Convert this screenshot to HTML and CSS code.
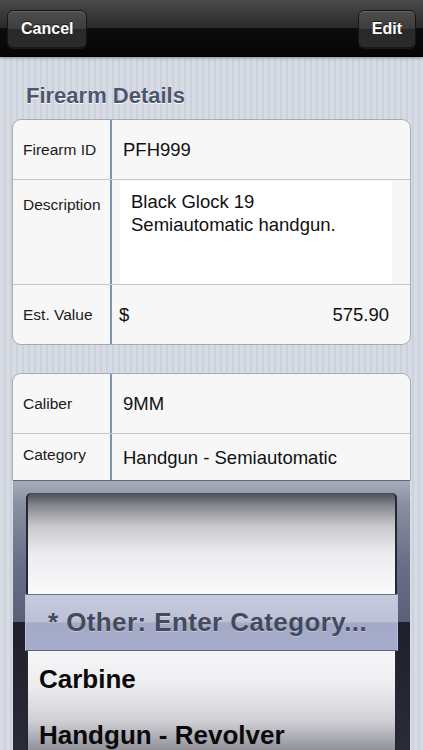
FILE: index.html
```html
<!DOCTYPE html>
<html lang="en">
<head>
    <meta charset="UTF-8">
    <meta name="viewport" content="width=device-width, initial-scale=1.0">
    <title>Firearm Details</title>
    <link rel="stylesheet" href="styles.css">
</head>
<body>
    <div class="navbar">
        <button class="nav-btn">Cancel</button>
        <button class="nav-btn">Edit</button>
    </div>

    <div class="content">
        <h1 class="section-title">Firearm Details</h1>

        <div class="card">
            <div class="row">
                <div class="label">Firearm ID</div>
                <div class="value">PFH999</div>
            </div>
            <div class="row row-tall">
                <div class="label label-top">Description</div>
                <div class="value value-area">
                    <div class="textarea">Black Glock 19<br>Semiautomatic handgun.</div>
                </div>
            </div>
            <div class="row">
                <div class="label">Est. Value</div>
                <div class="value value-money">
                    <span>$</span>
                    <span>575.90</span>
                </div>
            </div>
        </div>

        <div class="card card-open">
            <div class="row">
                <div class="label">Caliber</div>
                <div class="value">9MM</div>
            </div>
            <div class="row row-short">
                <div class="label">Category</div>
                <div class="value">Handgun - Semiautomatic</div>
            </div>
        </div>

        <div class="picker">
            <div class="wheel">
                <div class="wheel-top"></div>
                <div class="select-bar">* Other: Enter Category...</div>
                <div class="wheel-rows">
                    <div class="wheel-row">Carbine</div>
                    <div class="wheel-row">Handgun - Revolver</div>
                </div>
            </div>
        </div>
    </div>
</body>
</html>
```

FILE: styles.css
```css
html, body {
    margin: 0;
    padding: 0;
}
body {
    width: 423px;
    height: 750px;
    overflow: hidden;
    font-family: "Liberation Sans", Arial, sans-serif;
    background-color: #d3d7e0;
    background-image: repeating-linear-gradient(to right, #d7dbe4 0, #d7dbe4 4px, #ccd1db 4px, #ccd1db 6px);
}
.navbar {
    position: relative;
    z-index: 2;
    height: 57px;
    display: flex;
    justify-content: space-between;
    align-items: center;
    padding: 0 7px;
    background: linear-gradient(#4a4a4a 0, #2a2a2a 50%, #0d0d0d 50%, #050505 100%);
    border-bottom: 1px solid #000;
    box-sizing: border-box;
    box-shadow: 0 1px 3px rgba(0,0,0,0.35);
}
.nav-btn {
    height: 38px;
    padding: 0 13px;
    margin-top: 1px;
    font-family: "Liberation Sans", Arial, sans-serif;
    font-size: 16px;
    font-weight: bold;
    color: #fff;
    text-shadow: 0 -1px 0 rgba(0,0,0,0.6);
    background: linear-gradient(#4e4e4e 0, #3c3c3c 50%, #282828 50%, #2c2c2c 100%);
    border: 1px solid #161616;
    border-radius: 6px;
    box-shadow: inset 0 1px 0 rgba(255,255,255,0.12), 0 1px 0 rgba(255,255,255,0.08);
}
.content {
    padding: 0 12px;
}
.section-title {
    margin: 0;
    padding: 27px 14px 0;
    height: 24px;
    line-height: 24px;
    font-size: 22px;
    font-weight: bold;
    color: #4d566e;
    text-shadow: 0 1px 0 #fff;
}
.card {
    margin-top: 11px;
    background-color: #f7f7f7;
    border: 1px solid #a8abb2;
    border-radius: 9px;
    overflow: hidden;
}
.card-open {
    margin-top: 28px;
    border-bottom: none;
    border-radius: 9px 9px 0 0;
}
.row {
    display: flex;
    height: 59px;
    border-bottom: 1px solid #c6c7ca;
}
.row:last-child {
    border-bottom: none;
}
.row-tall {
    height: 104px;
}
.row-short {
    height: 46px;
    align-items: stretch;
}
.label {
    width: 87px;
    flex-shrink: 0;
    padding-left: 10px;
    display: flex;
    align-items: center;
    font-size: 15.5px;
    color: #1a1a1a;
    border-right: 2px solid #7d93ad;
}
.label-top {
    align-items: flex-start;
    padding-top: 16px;
}
.value {
    flex: 1;
    display: flex;
    align-items: center;
    padding-left: 11px;
    font-size: 18.5px;
    color: #111;
}
.value-area {
    padding: 1px 18px 0 8px;
    align-items: stretch;
}
.textarea {
    flex: 1;
    background-color: #fff;
    padding: 9px 11px 0;
    line-height: 23px;
}
.value-money {
    justify-content: space-between;
    padding-left: 7px;
    padding-right: 21px;
}
.row-short .value {
    padding-top: 2px;
}
.row-short .label {
    padding-bottom: 4px;
}
.picker {
    margin: 0 1px;
    height: 271px;
    border-top: 1px solid #5f6476;
    box-sizing: border-box;
    padding: 12px 13px 0;
    background: linear-gradient(#a7acb8 0, #8a90a2 22px, #6a7088 80px, #5a6078 141px, #1f202b 141px, #2a2b36 100%);
}
.wheel {
    height: 100%;
    display: flex;
    flex-direction: column;
}
.wheel-top {
    height: 101px;
    flex-shrink: 0;
    border-radius: 5px 5px 0 0;
    border-left: 2px solid #252735;
    border-right: 2px solid #252735;
    background: linear-gradient(#4c4c55 0, #85858d 12%, #c6c6cb 32%, #ebebee 58%, #fafafb 100%);
}
.select-bar {
    height: 55px;
    flex-shrink: 0;
    margin: 0 -1px;
    padding-left: 22px;
    display: flex;
    align-items: center;
    font-size: 26px;
    font-weight: bold;
    letter-spacing: 0.4px;
    color: #434a5c;
    text-shadow: 0 1px 0 rgba(255,255,255,0.35);
    border-top: 1px solid #6d7290;
    border-bottom: 1px solid #5d6380;
    border-left: 1px solid #b9c0e8;
    border-right: 1px solid #b9c0e8;
    background: linear-gradient(#c7cbde 0, #bcc1d7 48%, #a3a9c7 52%, #a6acca 100%);
}
.wheel-rows {
    flex: 1;
    overflow: hidden;
    padding-left: 11px;
    border-left: 2px solid #252735;
    border-right: 2px solid #252735;
    background: linear-gradient(#f6f6f8 0, #ededf0 35%, #cfcfd5 70%, #8f8f98 100%);
}
.wheel-row {
    height: 56px;
    display: flex;
    align-items: center;
    font-size: 26px;
    font-weight: bold;
    color: #0a0a0a;
}
```
